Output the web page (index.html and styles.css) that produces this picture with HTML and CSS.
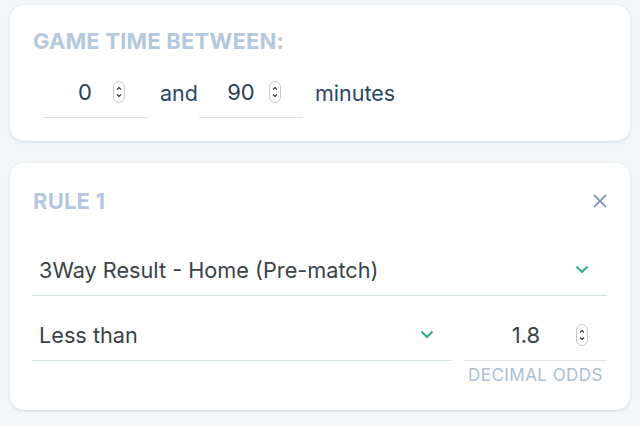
FILE: index.html
```html
<!DOCTYPE html>
<html>
<head>
<meta charset="utf-8">
<link rel="stylesheet" href="styles.css">
</head>
<body>
<div class="page">
  <section class="card card-time">
    <h2 class="title">GAME TIME BETWEEN:</h2>
    <div class="time-row">
      <div class="num-input num-a">
        <span class="num-value">0</span>
        <svg class="spin" width="12" height="22" viewBox="0 0 12 22"><rect x="0.5" y="0.5" width="11" height="21" rx="5.5" fill="#fff" stroke="#c9c9c9"/><path d="M4 8.5 L6 6.5 L8 8.5" fill="none" stroke="#333" stroke-width="1.1"/><path d="M4 13.5 L6 15.5 L8 13.5" fill="none" stroke="#333" stroke-width="1.1"/></svg>
      </div>
      <span class="word word-and">and</span>
      <div class="num-input num-b">
        <span class="num-value">90</span>
        <svg class="spin" width="12" height="22" viewBox="0 0 12 22"><rect x="0.5" y="0.5" width="11" height="21" rx="5.5" fill="#fff" stroke="#c9c9c9"/><path d="M4 8.5 L6 6.5 L8 8.5" fill="none" stroke="#333" stroke-width="1.1"/><path d="M4 13.5 L6 15.5 L8 13.5" fill="none" stroke="#333" stroke-width="1.1"/></svg>
      </div>
      <span class="word word-min">minutes</span>
    </div>
  </section>

  <section class="card card-rule">
    <div class="rule-head">
      <h2 class="title">RULE 1</h2>
      <svg class="close" width="14" height="14" viewBox="0 0 14 14"><path d="M1 1 L13 13 M13 1 L1 13" stroke="#7f9ab6" stroke-width="1.8" fill="none"/></svg>
    </div>
    <div class="select select-market">
      <span class="select-text">3Way Result - Home (Pre-match)</span>
      <svg class="chev" width="14" height="9" viewBox="0 0 14 9"><path d="M1.5 1.5 L7 7 L12.5 1.5" stroke="#3dab85" stroke-width="2.2" fill="none"/></svg>
    </div>
    <div class="rule-row">
      <div class="select select-op">
        <span class="select-text">Less than</span>
        <svg class="chev" width="14" height="9" viewBox="0 0 14 9"><path d="M1.5 1.5 L7 7 L12.5 1.5" stroke="#3dab85" stroke-width="2.2" fill="none"/></svg>
      </div>
      <div class="odds">
        <div class="num-input num-odds">
          <span class="num-value odds-value">1.8</span>
          <svg class="spin" width="12" height="22" viewBox="0 0 12 22"><rect x="0.5" y="0.5" width="11" height="21" rx="5.5" fill="#fff" stroke="#c9c9c9"/><path d="M4 8.5 L6 6.5 L8 8.5" fill="none" stroke="#333" stroke-width="1.1"/><path d="M4 13.5 L6 15.5 L8 13.5" fill="none" stroke="#333" stroke-width="1.1"/></svg>
        </div>
        <div class="hint">DECIMAL ODDS</div>
      </div>
    </div>
  </section>
</div>
</body>
</html>
```

FILE: styles.css
```css
* { box-sizing: border-box; }
html, body { margin: 0; padding: 0; }
body {
  background: #f3f7fa;
  font-family: Inter, "Noto Sans", sans-serif;
  width: 640px;
  height: 426px;
  overflow: hidden;
}
.page {
  padding: 5px 10px 0 10px;
  display: flex;
  flex-direction: column;
  gap: 22px;
}
.card {
  background: #fff;
  border-radius: 14px;
  box-shadow: 0 1px 3px rgba(40, 60, 80, 0.18);
}
.card-time {
  height: 136px;
  padding: 23px 22px 0 23px;
}
.card-rule {
  height: 247px;
  padding: 25px 23px 0 22px;
}
.title {
  margin: 0;
  font-size: 22px;
  line-height: 26px;
  font-weight: 700;
  color: #b3c8dc;
  letter-spacing: 0.2px;
}
.time-row {
  display: flex;
  align-items: flex-start;
  margin-top: 24px;
  padding-left: 10px;
}
.num-input {
  display: flex;
  align-items: center;
  border-bottom: 1px solid #dbe5e8;
}
.num-a, .num-b { height: 40px; padding-bottom: 11px; }
.num-a { width: 105px; padding-left: 14px; padding-right: 23px; }
.num-b { width: 104px; padding-left: 14px; padding-right: 22px; }
.num-value {
  flex: 1;
  text-align: center;
  font-size: 22px;
  line-height: 22px;
  color: #2e3d52;
}
.spin { display: block; flex: none; }
.word {
  font-size: 21.5px;
  line-height: 22px;
  padding-top: 4px;
  color: #2b4766;
}
.word-and { margin: 0 1px 0 12px; }
.word-min { margin-left: 12px; }

.rule-head {
  display: flex;
  justify-content: space-between;
  align-items: center;
  padding-left: 1px;
}
.close { display: block; }
.select {
  display: flex;
  align-items: center;
  justify-content: space-between;
  height: 52px;
  padding: 0 18px 0 7px;
  border-bottom: 1px solid #d3e4df;
}
.select-market { margin-top: 30px; }
.select-text {
  font-size: 21.7px;
  line-height: 26px;
  color: #3b4249;
}
.chev { display: block; }
.rule-row {
  display: flex;
  gap: 12px;
  margin-top: 13px;
}
.select-op { width: 420px; }
.odds { flex: 1; }
.num-odds { height: 52px; padding-left: 12px; padding-right: 19px; }
.odds-value { color: #3b4249; }
.hint {
  text-align: center;
  font-size: 17px;
  line-height: 20px;
  color: #a9c0d5;
  margin-top: 4px;
  letter-spacing: 0.45px;
}
```
